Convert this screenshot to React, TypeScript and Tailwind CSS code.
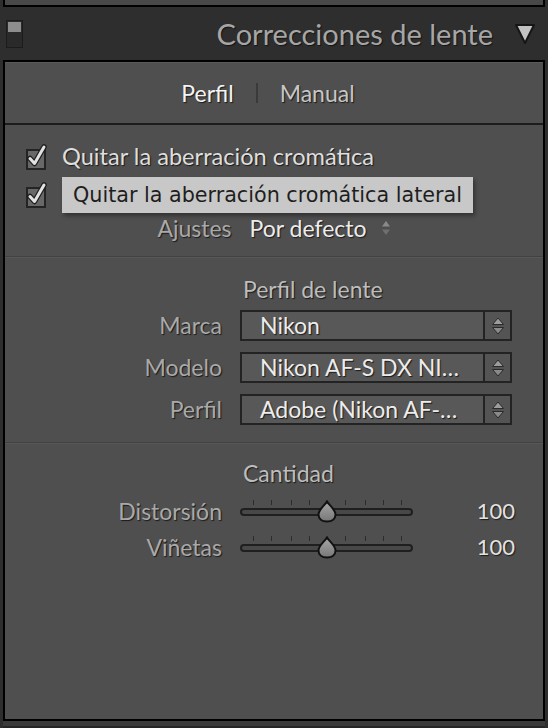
import React from "react";

const shadow = "[text-shadow:1px_1px_1px_#1a1a1a]";

function Check() {
  return (
    <svg width="24" height="26" viewBox="0 0 24 26" className="shrink-0">
      <rect x="1" y="6" width="18" height="19" fill="#686868" stroke="#242424" strokeWidth="2" />
      <path
        d="M4 14.5 L8.5 19.5 L18 3"
        fill="none"
        stroke="#1e1e1e"
        strokeWidth="5.5"
        strokeLinecap="round"
        strokeLinejoin="round"
      />
      <path
        d="M4 14.5 L8.5 19.5 L18 3"
        fill="none"
        stroke="#e2e2e2"
        strokeWidth="3"
        strokeLinecap="round"
        strokeLinejoin="round"
      />
    </svg>
  );
}

function Spinner() {
  return (
    <svg width="14" height="20" viewBox="0 0 14 20">
      <path d="M7 2 L12.5 8.5 H1.5 Z" fill="#9c9c9c" stroke="#2a2a2a" strokeWidth="1" strokeLinejoin="round" />
      <path d="M7 18 L12.5 11.5 H1.5 Z" fill="#8a8a8a" stroke="#2a2a2a" strokeWidth="1" strokeLinejoin="round" />
    </svg>
  );
}

function Select({ value }: { value: string }) {
  return (
    <div className="w-[272px] h-[31px] border-2 border-[#232323] bg-[#585858] flex">
      <div className={`flex-1 pl-[18px] flex items-center text-[23px] leading-none text-[#ececec] whitespace-nowrap overflow-hidden ${shadow}`}>
        {value}
      </div>
      <div className="w-[27px] border-l-2 border-[#232323] bg-[#545454] flex items-center justify-center">
        <Spinner />
      </div>
    </div>
  );
}

function Slider() {
  const ticks = [253, 271, 291, 309, 345, 365, 383, 401];
  return (
    <div className="relative w-[173px] h-[24px]">
      {ticks.map((t, i) => (
        <div
          key={i}
          className="absolute top-[1px] w-[1px] h-[5px] bg-[#2c2c2c]"
          style={{ left: t - 240 }}
        />
      ))}
      <div className="absolute left-0 right-0 top-[9px] h-[8px] rounded-full border-2 border-[#1f1f1f] bg-[#484848]" />
      <svg width="24" height="24" viewBox="0 0 24 24" className="absolute left-[75px] top-[1px]">
        <defs>
          <linearGradient id="th" x1="0" y1="0" x2="0" y2="1">
            <stop offset="0" stopColor="#a8a8a8" />
            <stop offset="1" stopColor="#777" />
          </linearGradient>
        </defs>
        <path
          d="M12 1.5 C14 5 20.5 9.5 20.5 14.5 C20.5 19 17 21.5 12 21.5 C7 21.5 3.5 19 3.5 14.5 C3.5 9.5 10 5 12 1.5 Z"
          fill="url(#th)"
          stroke="#111"
          strokeWidth="2"
        />
      </svg>
    </div>
  );
}

function Row({ label, h, children }: { label: string; h: string; children: React.ReactNode }) {
  return (
    <div className={`flex items-center ${h}`}>
      <div className={`w-[217px] text-right text-[23px] leading-none text-[#a9a9a9] ${shadow}`}>{label}</div>
      <div className="ml-[18px]">{children}</div>
    </div>
  );
}

export default function App() {
  return (
    <div className="w-[548px] h-[728px] bg-[#2e2e2e] flex flex-col overflow-hidden font-['Lato',sans-serif]">
      <div className="h-[7px] mx-[3px] shrink-0 bg-[#484848] border-x-2 border-b-2 border-black" />

      <div className="h-[53px] shrink-0 flex items-center pl-[6px] pr-[12px]">
        <div className="w-[17px] h-[28px] border border-[#1c1c1c] bg-[#2a2a2a] p-[1px] flex flex-col">
          <div className="h-[10px] bg-[#8d8d8d]" />
        </div>
        <span className="ml-auto text-[29px] leading-none text-[#a6a6a6] [text-shadow:1px_1px_1px_#151515]">Correcciones de lente</span>
        <svg width="22" height="22" viewBox="0 0 22 22" className="ml-[21px]">
          <path d="M2 2 H20 L11 20 Z" fill="#c2c2c2" stroke="#151515" strokeWidth="2" strokeLinejoin="round" />
        </svg>
      </div>

      <div className="flex-1 mx-[3px] border-2 border-black bg-[#4f4f4f] flex flex-col">
        <div className="h-[63px] shrink-0 border-t border-[#5a5a5a] border-b-2 border-b-[#1c1c1c] flex items-center justify-center pr-[12px] text-[23px] leading-none">
          <span className={`text-[#f4f4f4] ${shadow}`}>Perfil</span>
          <span className="mx-[22px] w-[2px] h-[20px] bg-[#3a3a3a]" />
          <span className={`text-[#c6c6c6] ${shadow}`}>Manual</span>
        </div>

        <div className="pl-[21px] pt-[20px] flex flex-col">
          <div className="h-[24px] flex items-center">
            <Check />
            <span className={`ml-[12px] text-[23.6px] leading-none text-[#dedede] ${shadow}`}>Quitar la aberración cromática</span>
          </div>
          <div className="mt-[8px] h-[36px] flex items-center">
            <Check />
            <span className="ml-[12px] h-[36px] px-[11px] flex items-center bg-[#c8c8c8] text-[20.7px] leading-none text-[#1e1e1e] font-['DejaVu_Sans',sans-serif] shadow-[2px_3px_4px_rgba(0,0,0,0.35)]">
              Quitar la aberración cromática lateral
            </span>
          </div>
        </div>

        <div className="h-[30px] flex items-center justify-center text-[23px] leading-none">
          <span className={`text-[#a9a9a9] ${shadow}`}>Ajustes</span>
          <span className={`ml-[18px] text-[#ececec] ${shadow}`}>Por defecto</span>
          <svg width="10" height="16" viewBox="0 0 10 16" className="ml-[14px]">
            <path d="M5 1 L9 6.5 H1 Z" fill="#8a8a8a" />
            <path d="M5 15 L9 9.5 H1 Z" fill="#6f6f6f" />
          </svg>
        </div>

        <div className="mt-[13px] border-t border-[#424242] border-b border-b-[#575757]" />

        <div className="mt-[19px] h-[24px] flex items-center pl-[238px] text-[23px] leading-none text-[#bdbdbd] [text-shadow:1px_1px_1px_#1a1a1a]">
          Perfil de lente
        </div>

        <div className="mt-[9px] flex flex-col gap-[11px]">
          <Row label="Marca" h="h-[31px]"><Select value="Nikon" /></Row>
          <Row label="Modelo" h="h-[31px]"><Select value="Nikon AF-S DX NI…" /></Row>
          <Row label="Perfil" h="h-[31px]"><Select value="Adobe (Nikon AF-…" /></Row>
        </div>

        <div className="mt-[17px] border-t border-[#424242] border-b border-b-[#575757]" />

        <div className="mt-[17px] h-[24px] flex items-center pl-[238px] text-[23px] leading-none text-[#bdbdbd] [text-shadow:1px_1px_1px_#1a1a1a]">
          Cantidad
        </div>

        <div className="mt-[14px] flex flex-col gap-[12px]">
          {["Distorsión", "Viñetas"].map((l) => (
            <Row key={l} label={l} h="h-[24px]">
              <div className="flex items-center">
                <Slider />
                <span className={`w-[102px] text-right text-[22px] leading-none text-[#e2e2e2] ${shadow}`}>100</span>
              </div>
            </Row>
          ))}
        </div>
      </div>

      <div className="h-[7px] shrink-0 mx-[3px] bg-[#3a3a3a] border-b-2 border-[#262626]" />
    </div>
  );
}
